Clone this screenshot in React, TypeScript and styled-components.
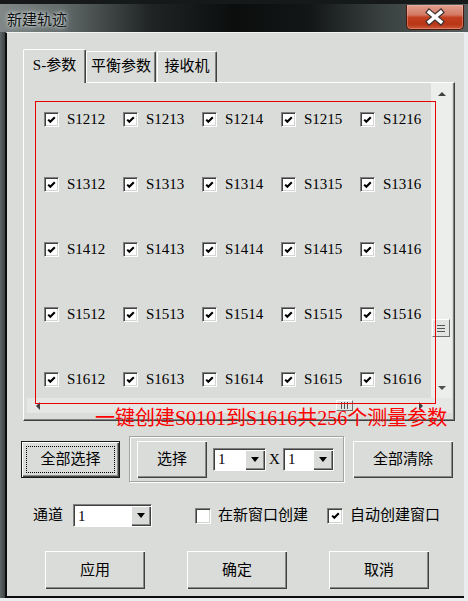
import React from "react";
import styled, { createGlobalStyle } from "styled-components";

const FONT = `"Liberation Serif", "Noto Sans CJK SC", serif`;

const GlobalStyle = createGlobalStyle`
  html, body { margin: 0; padding: 0; background: #e9eded; }
  body { width: 468px; height: 601px; overflow: hidden; font-family: ${FONT}; }
  * { box-sizing: border-box; }
`;

const Window = styled.div`
  position: relative;
  width: 468px;
  height: 601px;
  display: flex;
  flex-direction: column;
  background: #e9eded;
  font-family: ${FONT};
  color: #000;
`;

const TitleBar = styled.div`
  height: 32px;
  flex: none;
  display: flex;
  align-items: flex-start;
  padding: 0 4px 0 7px;
  border-top: 4px solid #161919;
  background: linear-gradient(
    90deg,
    #7f8787 0%,
    #636b6b 13%,
    #202424 32%,
    #0c0e0e 50%,
    #131616 66%,
    #3a4141 82%,
    #555d5d 100%
  );
`;

const Title = styled.div`
  font-size: 15px;
  line-height: 15px;
  margin-top: 9px;
  color: #111;
  text-shadow: 0 0 6px rgba(225, 235, 235, 0.95), 0 0 3px rgba(225, 235, 235, 0.9);
`;

const CloseButton = styled.div`
  margin-left: auto;
  margin-top: 1px;
  width: 58px;
  height: 25px;
  border: 1px solid #4a1810;
  border-top: none;
  border-radius: 0 0 5px 5px;
  background: linear-gradient(
    180deg,
    #e0a090 0%,
    #d47a64 40%,
    #c2401f 52%,
    #b83516 80%,
    #cc5a3a 100%
  );
  box-shadow: inset 0 0 0 1px rgba(255, 200, 180, 0.35);
  display: flex;
  align-items: center;
  justify-content: center;
`;

const FrameRow = styled.div`
  flex: 1;
  display: flex;
  margin-bottom: 3px;
`;

const LeftStrip = styled.div`
  width: 5px;
  flex: none;
  background: linear-gradient(90deg, #5d6565, #3b4242);
`;

const Client = styled.div`
  flex: 1;
  margin-right: 4px;
  display: flex;
  flex-direction: column;
  background: #dadcd9;
  border-top: 1px solid #f2f4f2;
  border-left: 2px solid #0c0e0e;
  border-bottom: 2px solid #0c0e0e;
`;

const TabArea = styled.div`
  margin: 16px 0 0 16px;
  width: 432px;
  display: flex;
  flex-direction: column;
`;

const TabStrip = styled.div`
  height: 33px;
  display: flex;
  align-items: flex-end;
  position: relative;
  z-index: 1;
`;

const Tab = styled.div<{ $active?: boolean; $w: number; $gap?: number }>`
  width: ${(p) => p.$w}px;
  margin-left: ${(p) => p.$gap ?? 0}px;
  height: ${(p) => (p.$active ? 34 : 31)}px;
  margin-bottom: ${(p) => (p.$active ? -1 : 0)}px;
  background: #dadcd9;
  border-top: 1px solid #ffffff;
  border-left: 1px solid #ffffff;
  border-right: 1px solid #404040;
  border-radius: 2px 2px 0 0;
  box-shadow: inset -1px 0 #808080;
  display: flex;
  align-items: center;
  justify-content: center;
  padding-bottom: ${(p) => (p.$active ? 3 : 1)}px;
  font-size: 15px;
  line-height: 15px;
  white-space: nowrap;
`;

const Panel = styled.div`
  height: 339px;
  background: #dadcd9;
  border-top: 1px solid #ffffff;
  border-left: 1px solid #ffffff;
  border-right: 1px solid #404040;
  border-bottom: 1px solid #404040;
  box-shadow: inset -1px -1px #808080;
  padding: 0 2px 7px 3px;
`;

const ScrollView = styled.div`
  height: 330px;
  display: grid;
  grid-template-columns: 1fr 21px;
  grid-template-rows: 1fr 15px;
`;

const Content = styled.div`
  overflow: hidden;
  padding: 29px 0 0 17px;
  display: grid;
  grid-template-columns: repeat(5, 79px);
  grid-auto-rows: 65px;
  align-content: start;
`;

const Cell = styled.div`
  display: flex;
  align-items: center;
  gap: 8px;
  height: 15px;
  font-size: 15px;
  line-height: 15px;
  white-space: nowrap;
`;

const VBar = styled.div`
  background: #eceeeb;
  display: flex;
  flex-direction: column;
`;

const HBar = styled.div`
  background: #e5e7e4;
  display: flex;
`;

const Corner = styled.div`
  background: #e5e7e4;
`;

const ArrowBox = styled.div<{ $len: number; $vertical?: boolean }>`
  flex: none;
  ${(p) => (p.$vertical ? `height: ${p.$len}px;` : `width: ${p.$len}px;`)}
  display: flex;
  align-items: center;
  justify-content: center;
`;

const Arrow = styled.span<{ $dir: "up" | "down" | "left" | "right" }>`
  width: 0;
  height: 0;
  ${(p) =>
    p.$dir === "up"
      ? "border-left: 4px solid transparent; border-right: 4px solid transparent; border-bottom: 4px solid #404040;"
      : p.$dir === "down"
      ? "border-left: 4px solid transparent; border-right: 4px solid transparent; border-top: 4px solid #505050;"
      : p.$dir === "left"
      ? "border-top: 4px solid transparent; border-bottom: 4px solid transparent; border-right: 4px solid #404040;"
      : "border-top: 4px solid transparent; border-bottom: 4px solid transparent; border-left: 4px solid #404040;"}
`;

const Track = styled.div<{ $vertical?: boolean }>`
  flex: 1;
  display: flex;
  flex-direction: ${(p) => (p.$vertical ? "column" : "row")};
  align-items: ${(p) => (p.$vertical ? "flex-start" : "center")};
`;

const Thumb = styled.div<{ $vertical?: boolean; $offset: number }>`
  ${(p) =>
    p.$vertical
      ? `width: 18px; height: 18px; margin-top: ${p.$offset}px; margin-left: 1px; flex-direction: column;`
      : `width: 17px; height: 11px; margin-left: ${p.$offset}px; flex-direction: row;`}
  background: #e2e4e1;
  border-top: 1px solid #ffffff;
  border-left: 1px solid #ffffff;
  border-right: 1px solid #707070;
  border-bottom: 1px solid #707070;
  display: flex;
  align-items: center;
  justify-content: center;
  gap: 2px;
`;

const Grip = styled.span<{ $vertical?: boolean }>`
  ${(p) => (p.$vertical ? "width: 8px; height: 1px;" : "width: 1px; height: 7px;")}
  background: #555;
`;

const RedFrame = styled.div`
  position: absolute;
  left: 35px;
  top: 101px;
  width: 401px;
  height: 303px;
  border: 1px solid #e80000;
  pointer-events: none;
`;

const RedNote = styled.div`
  position: absolute;
  left: 95px;
  top: 406px;
  font-size: 20px;
  line-height: 24px;
  color: #ff0000;
  white-space: nowrap;
  pointer-events: none;
`;

const Row = styled.div<{ $top: number; $left: number; $gap?: number; $h: number }>`
  margin-top: ${(p) => p.$top}px;
  padding-left: ${(p) => p.$left}px;
  height: ${(p) => p.$h}px;
  display: flex;
  align-items: center;
  gap: ${(p) => p.$gap ?? 0}px;
`;

const Button = styled.div<{ $w: number; $h: number; $default?: boolean }>`
  position: relative;
  width: ${(p) => p.$w}px;
  height: ${(p) => p.$h}px;
  flex: none;
  background: #dadcd9;
  border: ${(p) => (p.$default ? "1px solid #1a1a1a" : "none")};
  box-shadow: inset 1px 1px #ffffff, inset -1px -1px #404040, inset -2px -2px #8a8a8a;
  display: flex;
  align-items: center;
  justify-content: center;
  font-size: 15px;
  line-height: 15px;
  white-space: nowrap;
  ${(p) =>
    p.$default
      ? `&::after { content: ""; position: absolute; inset: 4px; border: 1px dotted #000; }`
      : ""}
`;

const GroupBox = styled.div`
  width: 215px;
  height: 46px;
  flex: none;
  border: 1px solid #a2a4a1;
  box-shadow: inset 1px 1px #ffffff, 1px 1px #ffffff;
  display: flex;
  align-items: center;
  padding-left: 7px;
`;

const ComboWrap = styled.div<{ $w: number; $ml?: number }>`
  width: ${(p) => p.$w}px;
  margin-left: ${(p) => p.$ml ?? 0}px;
  height: 23px;
  flex: none;
  display: flex;
  border-top: 1px solid #808080;
  border-left: 1px solid #808080;
  border-bottom: 1px solid #ffffff;
  border-right: 1px solid #ffffff;
  box-shadow: inset 1px 1px #404040;
  background: #ffffff;
`;

const ComboField = styled.div`
  flex: 1;
  padding: 1px 0 0 4px;
  display: flex;
  align-items: center;
  font-size: 15px;
  line-height: 15px;
`;

const DropButton = styled.div`
  width: 20px;
  flex: none;
  margin: 1px 0 0 0;
  background: #dadcd9;
  box-shadow: inset 1px 1px #ffffff, inset -1px -1px #404040, inset -2px -2px #8a8a8a;
  display: flex;
  align-items: center;
  justify-content: center;
  padding-bottom: 1px;
`;

const DropArrow = styled.span`
  width: 0;
  height: 0;
  border-left: 4px solid transparent;
  border-right: 4px solid transparent;
  border-top: 5px solid #000;
`;

const XLabel = styled.span`
  width: 17px;
  text-align: center;
  font-size: 15px;
  line-height: 15px;
`;

const Label = styled.span<{ $mr?: number }>`
  font-size: 15px;
  line-height: 15px;
  margin-right: ${(p) => p.$mr ?? 0}px;
  white-space: nowrap;
`;

const CheckRow = styled.label<{ $ml: number }>`
  margin-left: ${(p) => p.$ml}px;
  display: flex;
  align-items: center;
  gap: 7px;
  font-size: 15px;
  line-height: 15px;
  white-space: nowrap;
`;

const Box = styled.span<{ $size: number }>`
  width: ${(p) => p.$size}px;
  height: ${(p) => p.$size}px;
  flex: none;
  background: #ffffff;
  border-top: 1px solid #808080;
  border-left: 1px solid #808080;
  border-bottom: 1px solid #ffffff;
  border-right: 1px solid #ffffff;
  box-shadow: inset 1px 1px #404040, inset -1px -1px #d4d4d4;
  display: flex;
  align-items: center;
  justify-content: center;
`;

const CheckBox: React.FC<{ checked?: boolean; size?: number }> = ({ checked, size = 15 }) => (
  <Box $size={size}>
    {checked && (
      <svg width="9" height="8" viewBox="0 0 9 8">
        <polyline points="1.2,3.6 3.3,5.8 7.8,1.2" fill="none" stroke="#000" strokeWidth="2.1" />
      </svg>
    )}
  </Box>
);

const Combo: React.FC<{ w: number; ml?: number; value: string }> = ({ w, ml, value }) => (
  <ComboWrap $w={w} $ml={ml}>
    <ComboField>{value}</ComboField>
    <DropButton>
      <DropArrow />
    </DropButton>
  </ComboWrap>
);

const rows = [12, 13, 14, 15, 16];
const cols = [12, 13, 14, 15, 16];

export default function App() {
  return (
    <>
      <GlobalStyle />
      <Window>
        <TitleBar>
          <Title>新建轨迹</Title>
          <CloseButton>
            <svg width="58" height="24" viewBox="0 0 58 24">
              <g strokeLinecap="square">
                <line x1="23" y1="7" x2="35" y2="17" stroke="#3a3030" strokeWidth="6" />
                <line x1="35" y1="7" x2="23" y2="17" stroke="#3a3030" strokeWidth="6" />
                <line x1="23" y1="7" x2="35" y2="17" stroke="#ffffff" strokeWidth="3.6" />
                <line x1="35" y1="7" x2="23" y2="17" stroke="#ffffff" strokeWidth="3.6" />
              </g>
            </svg>
          </CloseButton>
        </TitleBar>
        <FrameRow>
          <LeftStrip />
          <Client>
            <TabArea>
              <TabStrip>
                <Tab $active $w={63}>S-参数</Tab>
                <Tab $w={70}>平衡参数</Tab>
                <Tab $w={60} $gap={1}>接收机</Tab>
              </TabStrip>
              <Panel>
                <ScrollView>
                  <Content>
                    {rows.map((r) =>
                      cols.map((c) => (
                        <Cell key={`${r}-${c}`}>
                          <CheckBox checked />
                          <span>{`S${r}${c}`}</span>
                        </Cell>
                      ))
                    )}
                  </Content>
                  <VBar>
                    <ArrowBox $vertical $len={21}>
                      <Arrow $dir="up" />
                    </ArrowBox>
                    <Track $vertical>
                      <Thumb $vertical $offset={215}>
                        <Grip $vertical />
                        <Grip $vertical />
                        <Grip $vertical />
                      </Thumb>
                    </Track>
                    <ArrowBox $vertical $len={21}>
                      <Arrow $dir="down" />
                    </ArrowBox>
                  </VBar>
                  <HBar>
                    <ArrowBox $len={21}>
                      <Arrow $dir="left" />
                    </ArrowBox>
                    <Track>
                      <Thumb $offset={288}>
                        <Grip />
                        <Grip />
                        <Grip />
                      </Thumb>
                    </Track>
                    <ArrowBox $len={21}>
                      <Arrow $dir="right" />
                    </ArrowBox>
                  </HBar>
                  <Corner />
                </ScrollView>
              </Panel>
            </TabArea>

            <Row $top={15} $left={14} $gap={9} $h={46}>
              <Button $w={99} $h={37} $default>全部选择</Button>
              <GroupBox>
                <Button $w={70} $h={37}>选择</Button>
                <Combo w={53} ml={6} value="1" />
                <XLabel>X</XLabel>
                <Combo w={51} value="1" />
              </GroupBox>
              <Button $w={100} $h={37}>全部清除</Button>
            </Row>

            <Row $top={22} $left={26} $h={23}>
              <Label $mr={10}>通道</Label>
              <Combo w={79} value="1" />
              <CheckRow $ml={43}>
                <CheckBox size={16} />
                <span>在新窗口创建</span>
              </CheckRow>
              <CheckRow $ml={19}>
                <CheckBox size={16} checked />
                <span>自动创建窗口</span>
              </CheckRow>
            </Row>

            <Row $top={24} $left={38} $gap={42} $h={38}>
              <Button $w={100} $h={38}>应用</Button>
              <Button $w={100} $h={38}>确定</Button>
              <Button $w={100} $h={38}>取消</Button>
            </Row>
          </Client>
        </FrameRow>
        <RedFrame />
        <RedNote>一键创建S0101到S1616共256个测量参数</RedNote>
      </Window>
    </>
  );
}
